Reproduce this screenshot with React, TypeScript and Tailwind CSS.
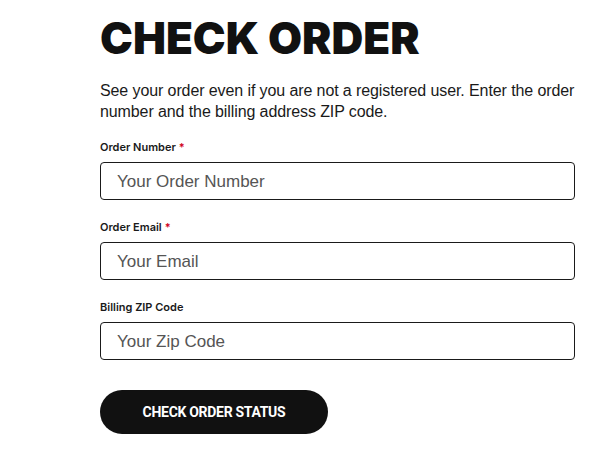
import React from "react";

type Field = {
  label: string;
  placeholder: string;
  required?: boolean;
  type?: string;
};

const fields: Field[] = [
  { label: "Order Number", placeholder: "Your Order Number", required: true },
  { label: "Order Email", placeholder: "Your Email", required: true, type: "email" },
  { label: "Billing ZIP Code", placeholder: "Your Zip Code" },
];

function FormField({ label, placeholder, required, type = "text" }: Field) {
  return (
    <label className="flex flex-col">
      <span className="text-[11px] leading-[14px] font-semibold text-[#1a1a1a] font-[Inter,sans-serif]">
        {label}
        {required && <span className="text-[#d0021b] ml-[3px]">*</span>}
      </span>
      <input
        type={type}
        placeholder={placeholder}
        className="mt-[8px] h-[38px] w-full rounded-[4px] border border-[#1a1a1a] bg-white px-[16px] pt-[1px] text-[17px] text-[#111] placeholder:text-[#555] outline-none"
      />
    </label>
  );
}

export default function App() {
  return (
    <div className="min-h-[452px] w-[604px] bg-white font-['Liberation_Sans',Arial,sans-serif]">
      <div className="ml-[100px] w-[475px] pt-[14px]">
        <h1 className="text-[44px] leading-[48px] font-black text-[#111] font-[Inter,sans-serif]">
          CHECK ORDER
        </h1>
        <p className="mt-[18px] text-[16px] leading-[21px] tracking-[-0.1px] text-[#1a1a1a]">
          See your order even if you are not a registered user. Enter the order
          number and the billing address ZIP code.
        </p>
        <div className="mt-[18px] flex flex-col gap-[20px]">
          {fields.map((f) => (
            <FormField key={f.label} {...f} />
          ))}
        </div>
        <button className="mt-[30px] h-[44px] w-[228px] rounded-full bg-[#111] text-[14px] font-bold uppercase tracking-[-0.3px] text-white font-[Roboto,sans-serif]">
          Check Order Status
        </button>
      </div>
    </div>
  );
}
